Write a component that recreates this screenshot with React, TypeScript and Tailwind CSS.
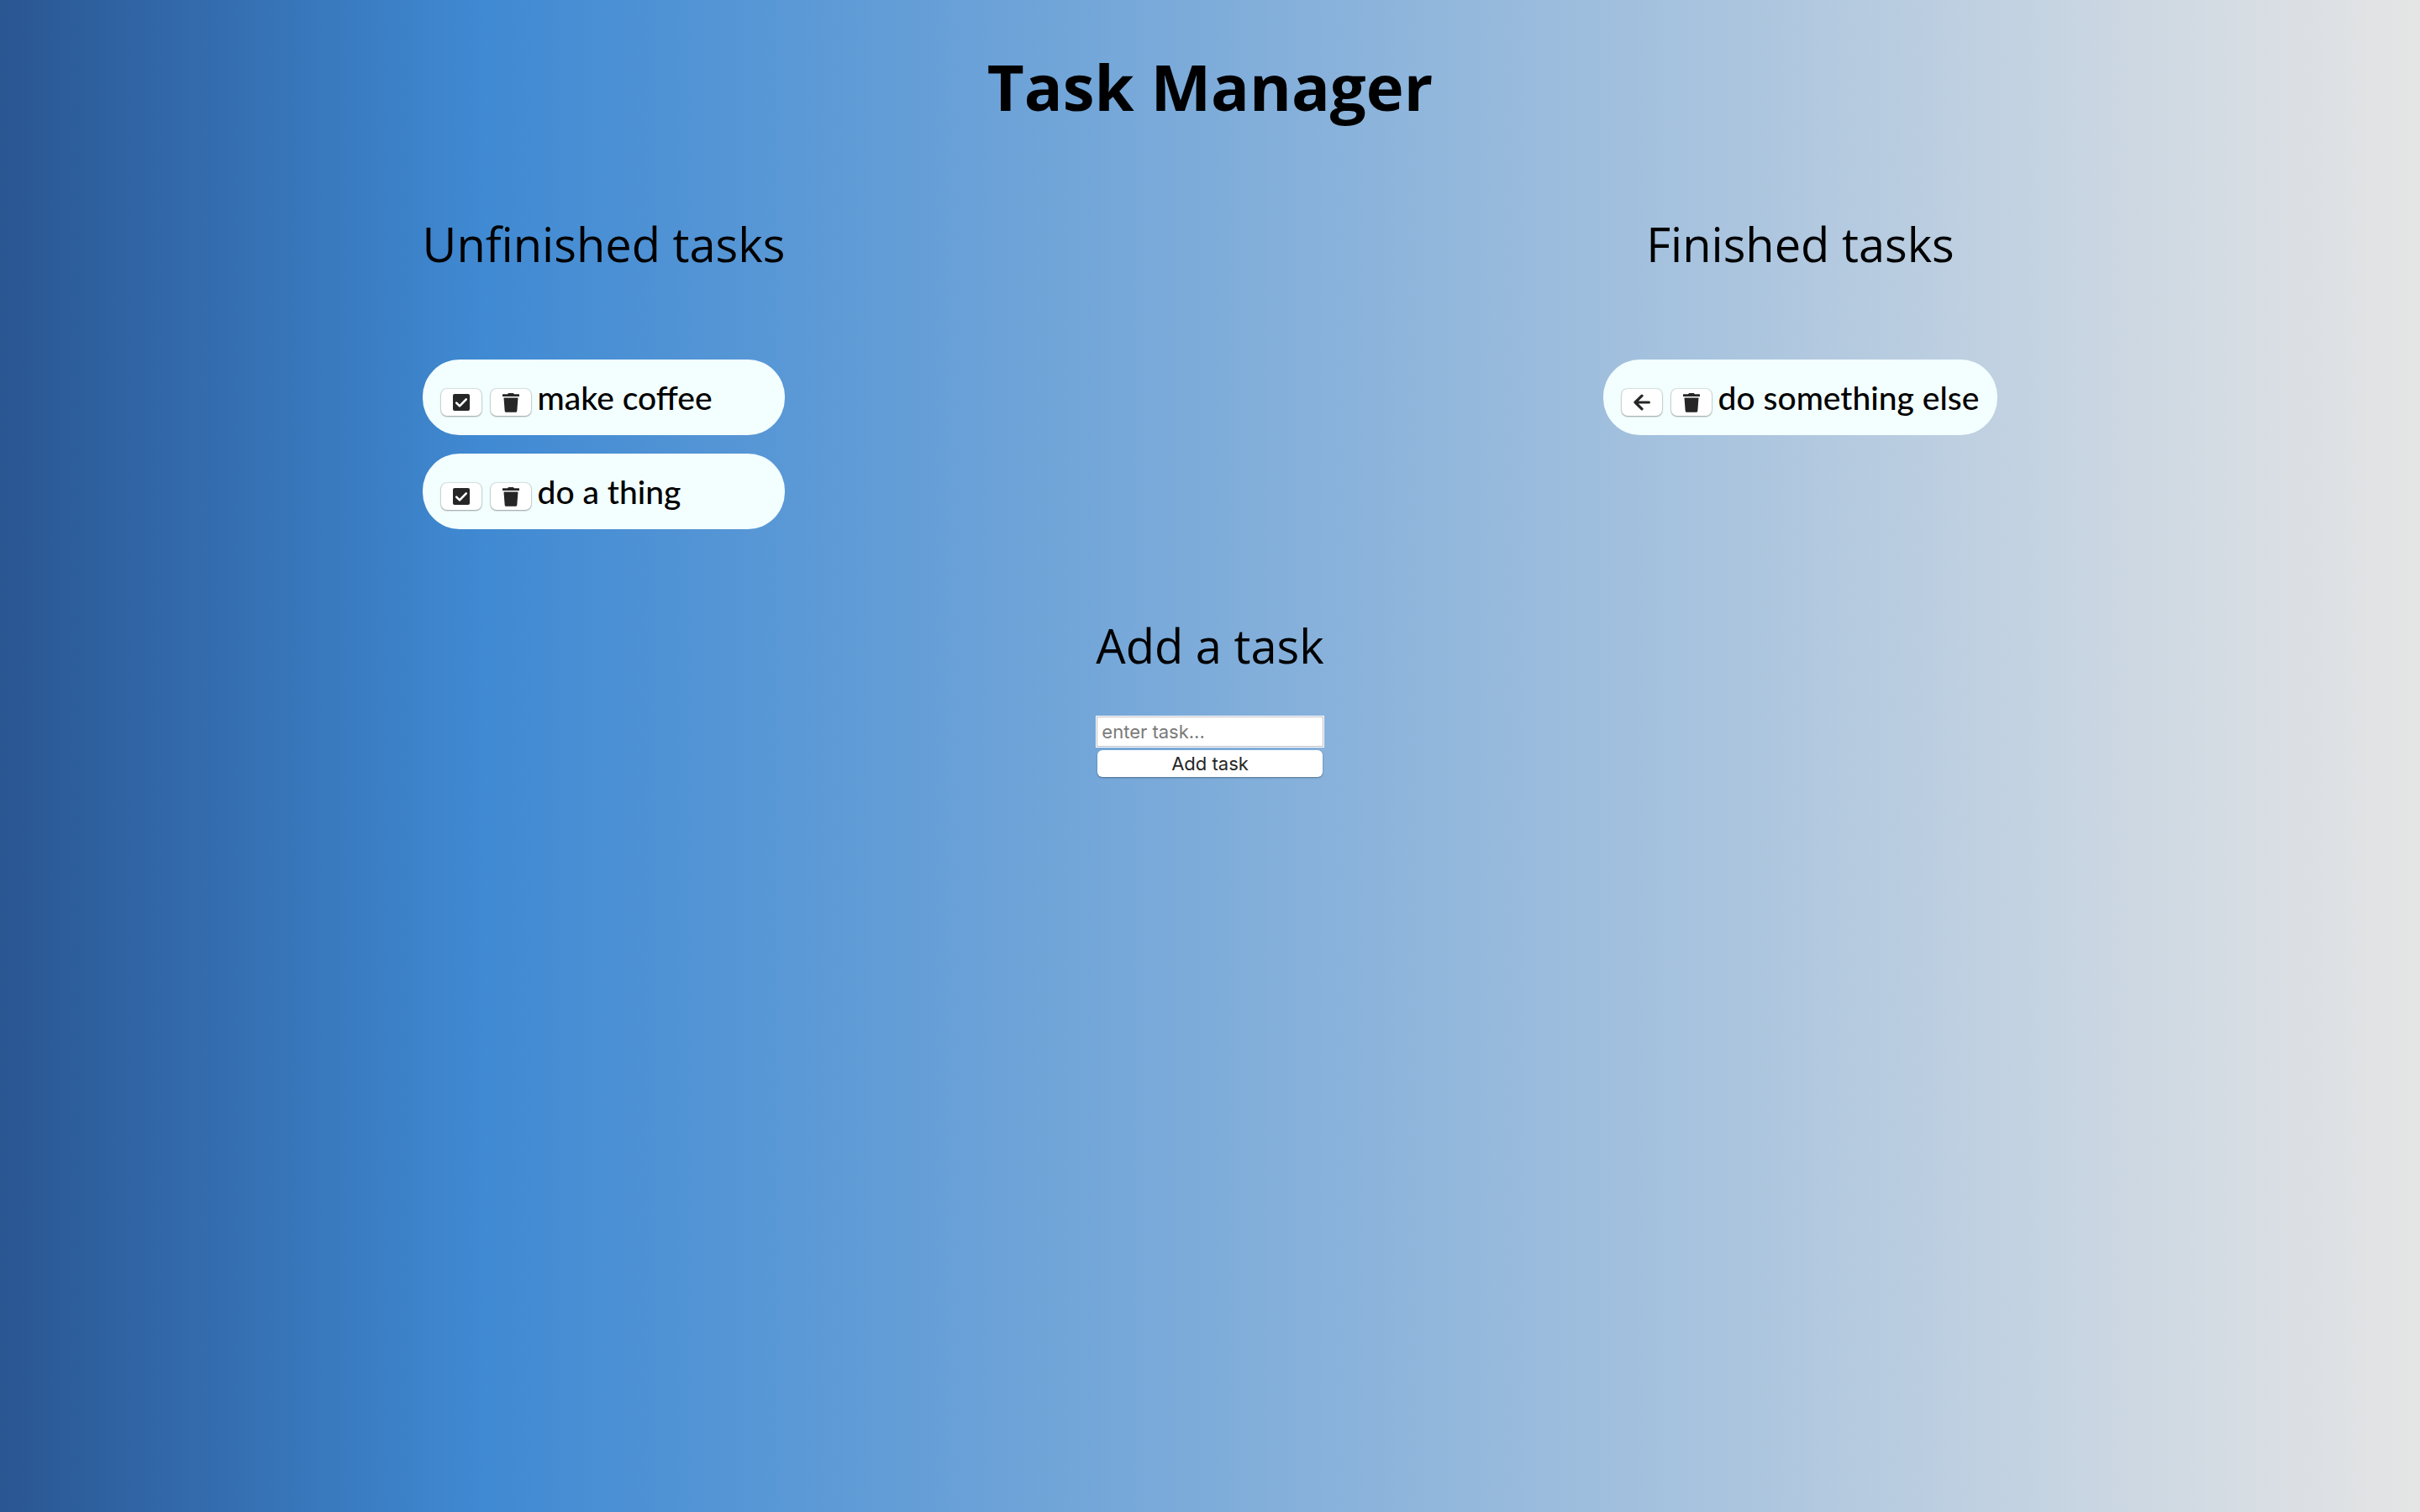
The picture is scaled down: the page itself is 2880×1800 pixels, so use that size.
import type { ReactNode } from "react";

type Task = { id: number; label: string };

const unfinished: Task[] = [
  { id: 1, label: "make coffee" },
  { id: 2, label: "do a thing" },
];
const finished: Task[] = [{ id: 3, label: "do something else" }];

function CheckIcon() {
  return (
    <svg viewBox="0 0 20 20" className="size-5" aria-hidden="true">
      <rect width="20" height="20" rx="2" fill="currentColor" />
      <path
        d="M4.2 10.6l3.8 3.8 7.8-8"
        fill="none"
        stroke="#fff"
        strokeWidth="2.6"
        strokeLinecap="round"
        strokeLinejoin="round"
      />
    </svg>
  );
}

function TrashIcon() {
  return (
    <svg viewBox="0 0 20 23" className="h-[23px] w-5" fill="currentColor" aria-hidden="true">
      <path d="M0.5 1.2H6L7.2 0h5.6L14 1.2h5.5a.5.5 0 0 1 .5.5V4H0V1.7a.5.5 0 0 1 .5-.5z" />
      <path d="M1.5 5.4h17l-1.2 15.8a1.7 1.7 0 0 1-1.7 1.6H4.4a1.7 1.7 0 0 1-1.7-1.6z" />
    </svg>
  );
}

function BackIcon() {
  return (
    <svg
      viewBox="0 0 20 20"
      className="size-5"
      fill="none"
      stroke="currentColor"
      strokeWidth="3.2"
      strokeLinecap="round"
      strokeLinejoin="round"
      aria-hidden="true"
    >
      <path d="M18.4 10H2M10 2.2L2 10l8 7.8" />
    </svg>
  );
}

function IconButton({ label, children }: { label: string; children: ReactNode }) {
  return (
    <button
      type="button"
      aria-label={label}
      className="flex h-8 w-12 items-center justify-center rounded-[7px] bg-white text-[#262626] shadow-[0_0_1px_1px_rgba(0,0,0,0.12),0_1px_2px_rgba(0,0,0,0.3)]"
    >
      {children}
    </button>
  );
}

function TaskColumn({ title, tasks, done }: { title: string; tasks: Task[]; done: boolean }) {
  return (
    <section className="flex flex-col items-center">
      <h2 className="text-[56px] leading-20">{title}</h2>
      <ul className="mt-[98px] flex w-full flex-col gap-[22px] font-[Lato,sans-serif]">
        {tasks.map((task) => (
          <li key={task.id} className="flex h-[90px] items-center gap-2 rounded-[44px] bg-[#f3ffff] px-[22px]">
            <div className="flex gap-[11px] pt-3">
              <IconButton label={done ? "Move back" : "Mark as finished"}>
                {done ? <BackIcon /> : <CheckIcon />}
              </IconButton>
              <IconButton label="Delete">
                <TrashIcon />
              </IconButton>
            </div>
            <span className="text-[39px] leading-12 font-medium">{task.label}</span>
          </li>
        ))}
      </ul>
    </section>
  );
}

export default function App() {
  return (
    <div className="min-h-screen bg-[linear-gradient(to_right,#2a5692,#408ad3_20%,#e5e5e5)] px-4 pt-[51px] font-['Open_Sans',sans-serif] text-black">
      <h1 className="text-center text-[76px] leading-[104px] font-bold">Task Manager</h1>
      <main className="mt-[95px]">
        <div className="flex items-start justify-around">
          <TaskColumn title="Unfinished tasks" tasks={unfinished} done={false} />
          <TaskColumn title="Finished tasks" tasks={finished} done />
        </div>
        <form className="mx-auto mt-[98px] flex w-fit flex-col" onSubmit={(e) => e.preventDefault()}>
          <label htmlFor="task" className="text-[56px] leading-20">
            Add a task
          </label>
          <input
            id="task"
            type="text"
            placeholder="enter task..."
            className="mt-11 h-[38px] w-0 min-w-full border border-white bg-white px-1.5 font-[Inter,sans-serif] text-[22px] leading-7 shadow-[inset_0_0_0_1px_#c0c0c8] placeholder:text-[#7a7a7a]"
          />
          <button
            type="submit"
            className="mx-0.5 mt-[3px] h-8 rounded-[6px] bg-white font-[Inter,sans-serif] text-[22px] leading-7 text-[#262626] shadow-[0_1px_2px_rgba(0,0,0,0.35)]"
          >
            Add task
          </button>
        </form>
      </main>
    </div>
  );
}
